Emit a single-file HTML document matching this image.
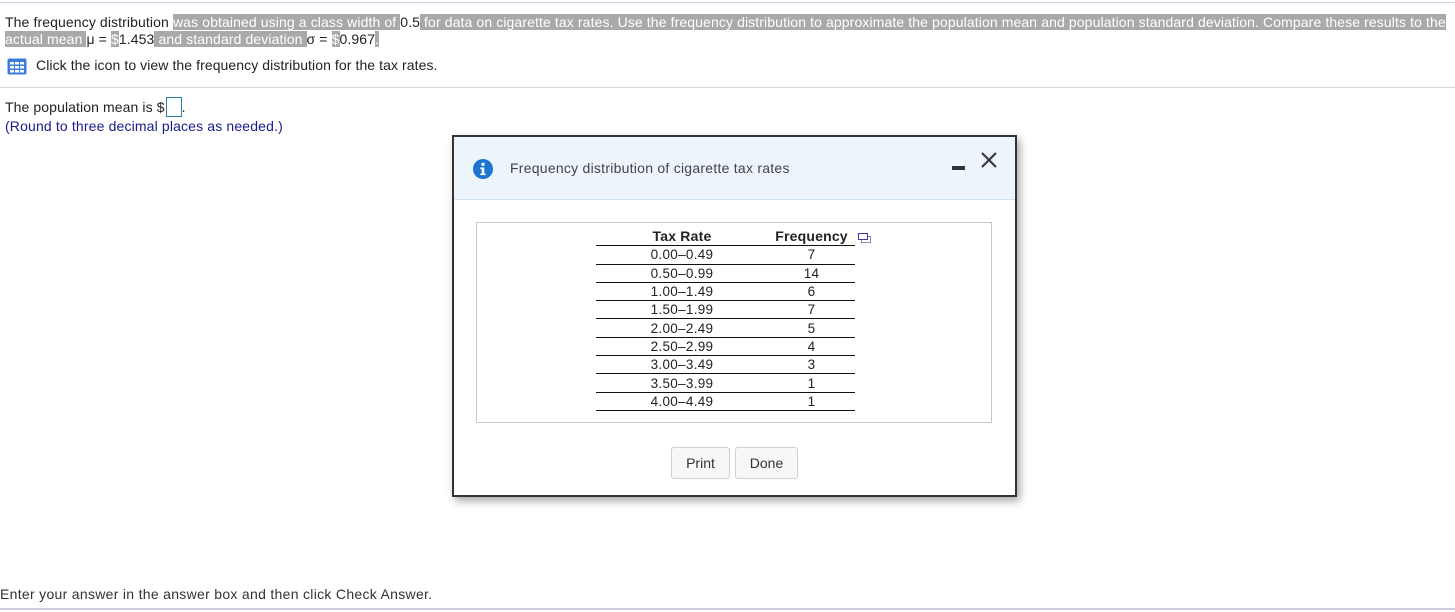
<!DOCTYPE html>
<html><head><meta charset="utf-8"><style>
body{margin:0;width:1455px;height:612px;position:relative;overflow:hidden;background:#fff;font-family:"Liberation Sans",Arial,sans-serif;font-size:14px;color:#222}
.a{position:absolute;white-space:nowrap}
.h{background:#a9a9a9;color:#fff}
.tbl{position:absolute;left:596px;top:228px;width:259px;border-collapse:collapse;font-size:13.5px;letter-spacing:0.3px}
.tbl td,.tbl th{padding:0;height:17.3px;line-height:17px;border-bottom:1.5px solid #111;text-align:center}
.tbl th{font-weight:bold;font-size:14px;letter-spacing:0.2px}
.btn{position:absolute;top:447px;height:30px;border:1px solid #d0d0d0;border-radius:3px;background:#f7f7f7;font-size:14px;line-height:30px;text-align:center;color:#333}
</style></head><body>
<div class="a" style="left:0;top:2px;width:1455px;height:1px;background:#cdd3e3"></div>
<div class="a" style="left:5px;top:14px;line-height:16px;letter-spacing:0.11px">The frequency distribution <span class="h">was obtained using a class width of </span>0.5<span class="h"> for data on cigarette tax rates. Use the frequency distribution to approximate the population mean and population standard deviation. Compare these results to the </span></div>
<div class="a" style="left:5px;top:31px;line-height:16px;letter-spacing:0.11px"><span class="h">actual mean </span> μ = <span class="h">$</span>1.453<span class="h"> and standard deviation </span> σ = <span class="h">$</span>0.967<span class="h">.</span></div>
<svg class="a" style="left:7px;top:58px" width="20" height="17" viewBox="0 0 20 17"><rect x="0.5" y="0.5" width="19" height="16" rx="2" fill="#3b7ddd"/><g fill="#fff"><rect x="3" y="4" width="4" height="2.5"/><rect x="8" y="4" width="4" height="2.5"/><rect x="13" y="4" width="4" height="2.5"/><rect x="3" y="8" width="4" height="2.5"/><rect x="8" y="8" width="4" height="2.5"/><rect x="13" y="8" width="4" height="2.5"/><rect x="3" y="12" width="4" height="2.5"/><rect x="8" y="12" width="4" height="2.5"/><rect x="13" y="12" width="4" height="2.5"/></g></svg>
<div class="a" style="left:36px;top:57px;line-height:16px;letter-spacing:0.08px">Click the icon to view the frequency distribution for the tax rates.</div>
<div class="a" style="left:0;top:87px;width:1455px;height:1px;background:#d6d6d6"></div>
<div class="a" style="left:5px;top:97px;line-height:17px;letter-spacing:0.1px">The population mean is $<span style="display:inline-block;width:14px;height:18px;border:1px solid #2b7fb0;vertical-align:-5px;margin-left:1px"></span>.</div>
<div class="a" style="left:5px;top:118px;line-height:17px;color:#1a1a8c;letter-spacing:0.15px">(Round to three decimal places as needed.)</div>

<div class="a" style="left:452px;top:135px;width:561px;height:358px;border:2px solid #333;background:#fff;box-shadow:3px 4px 8px rgba(0,0,0,.35)">
 <div style="position:absolute;left:0;top:0;width:561px;height:62px;background:#eef4fc;border-bottom:1px solid #cfe2f5"></div>
 <svg style="position:absolute;left:19px;top:22px" width="20" height="20" viewBox="0 0 20 20"><circle cx="10" cy="10" r="10" fill="#1b75d0"/><circle cx="10" cy="5.3" r="1.7" fill="#fff"/><path d="M7.3 8.5h4v6h1.4v1.6H7.3v-1.6h1.4v-4.4H7.3z" fill="#fff"/></svg>
 <div style="position:absolute;left:56px;top:23px;font-size:14px;color:#444;letter-spacing:0.25px">Frequency distribution of cigarette tax rates</div>
 <div style="position:absolute;left:498px;top:29px;width:13px;height:4px;background:#333"></div>
 <svg style="position:absolute;left:526px;top:14px" width="18" height="18" viewBox="0 0 18 18"><path d="M2 2L16 16M16 2L2 16" stroke="#333" stroke-width="2"/></svg>
 <div style="position:absolute;left:22px;top:85px;width:514px;height:199px;border:1px solid #c8c8c8"></div>
</div>
<table class="tbl">
<tr><th style="width:172px">Tax Rate</th><th>Frequency</th></tr>
<tr><td>0.00–0.49</td><td>7</td></tr>
<tr><td>0.50–0.99</td><td>14</td></tr>
<tr><td>1.00–1.49</td><td>6</td></tr>
<tr><td>1.50–1.99</td><td>7</td></tr>
<tr><td>2.00–2.49</td><td>5</td></tr>
<tr><td>2.50–2.99</td><td>4</td></tr>
<tr><td>3.00–3.49</td><td>3</td></tr>
<tr><td>3.50–3.99</td><td>1</td></tr>
<tr><td>4.00–4.49</td><td>1</td></tr>
</table>
<svg class="a" style="left:858px;top:233px" width="14" height="11" viewBox="0 0 14 11"><rect x="3.5" y="3.5" width="9" height="6" fill="#fff" stroke="#8a8ac0"/><rect x="0.5" y="0.5" width="9" height="6" fill="#fff" stroke="#3a3a9a"/></svg>
<div class="btn" style="left:671px;width:57px">Print</div>
<div class="btn" style="left:735px;width:61px">Done</div>
<div class="a" style="left:0;top:586px;line-height:17px;color:#333;letter-spacing:0.3px">Enter your answer in the answer box and then click Check Answer.</div>
<div class="a" style="left:0;top:608px;width:1455px;height:2px;background:#cdd0dc"></div>
</body></html>
